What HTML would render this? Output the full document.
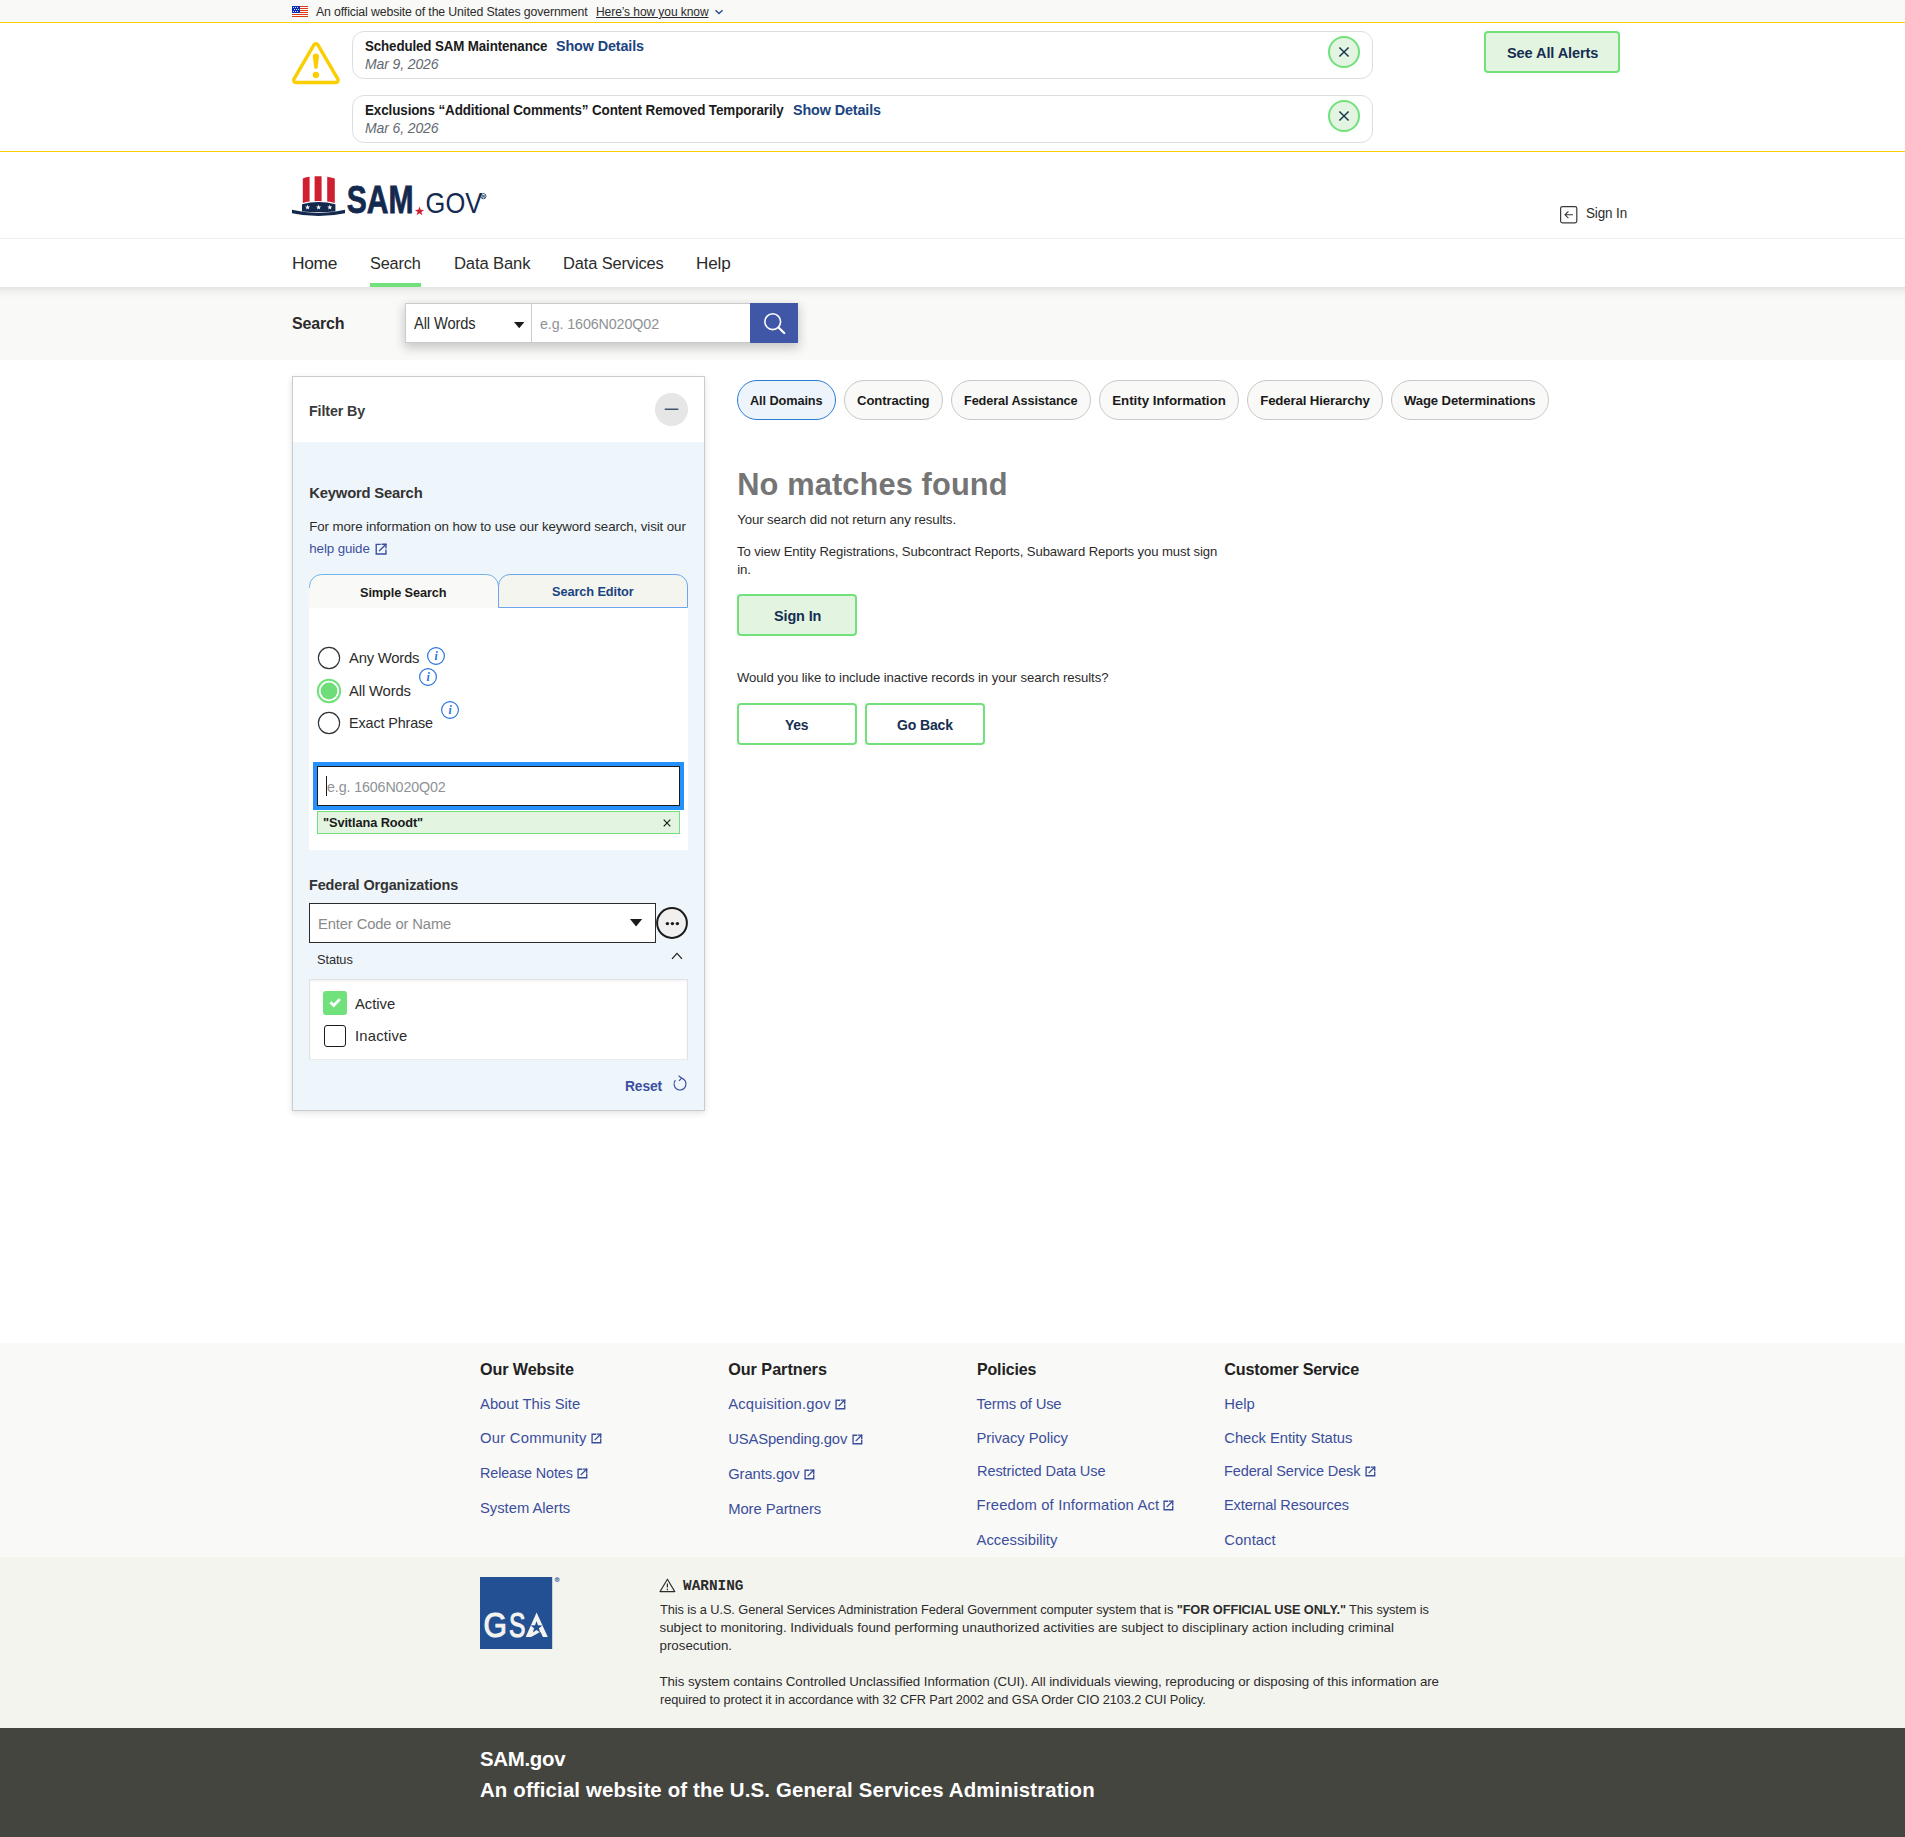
<!DOCTYPE html>
<html lang="en"><head><meta charset="utf-8"><title>SAM.gov | Search</title>
<style>
html,body{margin:0;padding:0;}
body{width:1905px;height:1837px;position:relative;overflow:hidden;background:#fff;font-family:"Liberation Sans", sans-serif;color:#1b1b1b;}
div,svg{position:absolute;box-sizing:border-box;}
.t{position:absolute;transform-origin:0 50%;white-space:nowrap;line-height:20px;height:20px;margin:0;padding:0;font-weight:400;display:block;text-decoration:none;}
a.t{cursor:pointer;}
svg{overflow:visible;}
</style></head>
<body>
<div style="left:0px;top:0px;width:1905px;height:21px;background:#f9f9f7;"></div>
<div style="left:0px;top:21px;width:1905px;height:1px;background:#f8fbfe;"></div>
<svg style="left:292px;top:6px" width="16" height="11" viewBox="0 0 16 11"><rect width="16" height="11" fill="#fff"/><rect y="0" width="16" height="1" fill="#dc3a10"/><rect y="2" width="16" height="1" fill="#dc3a10"/><rect y="4" width="16" height="1" fill="#dc3a10"/><rect y="6" width="16" height="1" fill="#dc3a10"/><rect y="8" width="16" height="1" fill="#dc3a10"/><rect y="10" width="16" height="1" fill="#dc3a10"/><rect width="8" height="7" fill="#0a2db5"/><circle cx="1.5" cy="1.5" r="0.56" fill="#fff"/><circle cx="3.5" cy="1.5" r="0.56" fill="#fff"/><circle cx="5.5" cy="1.5" r="0.56" fill="#fff"/><circle cx="2.5" cy="3.5" r="0.56" fill="#fff"/><circle cx="4.5" cy="3.5" r="0.56" fill="#fff"/><circle cx="6.5" cy="3.5" r="0.56" fill="#fff"/><circle cx="1.5" cy="5.5" r="0.56" fill="#fff"/><circle cx="3.5" cy="5.5" r="0.56" fill="#fff"/><circle cx="5.5" cy="5.5" r="0.56" fill="#fff"/></svg>
<svg style="left:714px;top:8px" width="10" height="8" viewBox="0 0 10 8" fill="none" stroke="#2e4c8f" stroke-width="1.4"><path d="M1.5 2.2L5 5.6L8.5 2.2"/></svg>
<div style="left:0px;top:22px;width:1905px;height:130px;background:#fff;border-top:1px solid #face00;border-bottom:1px solid #face00;"></div>
<svg style="left:288px;top:38px" width="56" height="50" viewBox="288 38 56 50" fill="none"><path d="M313.91 44.80A2.3 2.3 0 0 1 317.89 44.80L337.88 79.04A2.3 2.3 0 0 1 335.89 82.50L295.91 82.50A2.3 2.3 0 0 1 293.92 79.04Z" stroke="#face00" stroke-width="3.4"/><path d="M312.8 56.7A3.1 3.1 0 0 1 319 56.7L317.65 67.35A1.75 1.75 0 0 1 314.15 67.35Z" fill="#face00"/><circle cx="315.9" cy="74.95" r="3.15" fill="#face00"/></svg>
<div style="left:352px;top:31px;width:1021px;height:48px;background:#fff;border:1px solid #dcdee0;border-radius:12px;"></div>
<svg style="left:1327px;top:35px" width="34" height="34" viewBox="-17 -17 34 34"><circle r="15" fill="#e3f5e1" stroke="#70e17b" stroke-width="2"/><path d="M-4.6 -4.6L4.6 4.6M4.6 -4.6L-4.6 4.6" stroke="#162e51" stroke-width="1.4"/></svg>
<div style="left:352px;top:95px;width:1021px;height:48px;background:#fff;border:1px solid #dcdee0;border-radius:12px;"></div>
<svg style="left:1327px;top:99px" width="34" height="34" viewBox="-17 -17 34 34"><circle r="15" fill="#e3f5e1" stroke="#70e17b" stroke-width="2"/><path d="M-4.6 -4.6L4.6 4.6M4.6 -4.6L-4.6 4.6" stroke="#162e51" stroke-width="1.4"/></svg>
<div style="left:1484px;top:31px;width:136px;height:42px;background:#e3f5e1;border:2px solid #70e17b;border-radius:4px;"></div>
<div style="left:0px;top:152px;width:1905px;height:87px;background:#fff;border-bottom:1px solid #f1f1ec;"></div>
<svg style="left:290px;top:172px" width="200" height="48" viewBox="290 172 200 48"><path d="M302.8 178.4 Q306 177.2 309.6 176.8 V201.6 Q306 202 302.8 203 Z" fill="#cf2030"/><path d="M314.6 176.3 Q318 176.1 321.6 176.3 V201.2 Q318 201 314.6 201.2 Z" fill="#cf2030"/><path d="M327.2 176.8 Q331 177.2 334.8 178.6 V203 Q331 202 327.2 201.6 Z" fill="#cf2030"/><path d="M302 204.2 Q318.5 199.6 335.4 204.2 V211.4 Q318.5 213 302 211.4 Z" fill="#14294e"/><polygon points="307.60,204.60 308.23,206.43 310.17,206.47 308.63,207.63 309.19,209.48 307.60,208.38 306.01,209.48 306.57,207.63 305.03,206.47 306.97,206.43" fill="#fff"/><polygon points="318.60,204.60 319.23,206.43 321.17,206.47 319.63,207.63 320.19,209.48 318.60,208.38 317.01,209.48 317.57,207.63 316.03,206.47 317.97,206.43" fill="#fff"/><polygon points="329.80,204.60 330.43,206.43 332.37,206.47 330.83,207.63 331.39,209.48 329.80,208.38 328.21,209.48 328.77,207.63 327.23,206.47 329.17,206.43" fill="#fff"/><path d="M292 209.8 Q318.5 216.4 345 209.8 V213.2 Q318.5 219 292 213.2 Z" fill="#14294e"/><text x="346.8" y="212.7" font-family="Liberation Sans, sans-serif" font-weight="700" font-size="39" fill="#14294e" textLength="66.8" lengthAdjust="spacingAndGlyphs" stroke="#14294e" stroke-width="0.8">SAM</text><polygon points="419.50,206.50 420.65,209.81 424.16,209.89 421.36,212.01 422.38,215.36 419.50,213.36 416.62,215.36 417.64,212.01 414.84,209.89 418.35,209.81" fill="#cf2030"/><text x="425.6" y="212.7" font-family="Liberation Sans, sans-serif" font-weight="400" font-size="29.6" fill="#14294e" textLength="56.6" lengthAdjust="spacingAndGlyphs">GOV</text><circle cx="483.4" cy="196.2" r="2.6" fill="none" stroke="#14294e" stroke-width="0.8"/><text x="483.4" y="197.8" text-anchor="middle" font-family="Liberation Sans, sans-serif" font-weight="700" font-size="4.2" fill="#14294e">R</text></svg>
<svg style="left:1559px;top:205px" width="20" height="20" viewBox="1559 205 20 20" fill="none" stroke="#3a3a36" stroke-width="1.2"><rect x="1560.6" y="206.6" width="16.2" height="16.2" rx="1.8"/><path d="M1573 214.8H1565.2M1568.4 211.4L1565 214.8L1568.4 218.2" stroke-width="1.1"/></svg>
<div style="left:0px;top:239px;width:1905px;height:48px;background:#fff;"></div>
<div style="left:370px;top:283px;width:51px;height:4px;background:#70e17b;"></div>
<div style="left:0px;top:287px;width:1905px;height:73px;background:#f9f9f7;"></div>
<div style="left:0px;top:287px;width:1905px;height:11px;background:linear-gradient(to bottom, rgba(0,0,0,0.085), rgba(0,0,0,0.035) 40%, rgba(0,0,0,0));"></div>
<div style="left:405px;top:303px;width:393px;height:40px;background:#fff;box-shadow:0 4px 10px 1px rgba(0,0,0,0.2);"></div>
<div style="left:405px;top:303px;width:127px;height:40px;background:#fff;border:1px solid #c9cbcd;"></div>
<div style="left:531px;top:303px;width:220px;height:40px;background:#fff;border:1px solid #c9cbcd;"></div>
<svg style="left:514px;top:321.5px" width="10.4" height="6.2" viewBox="0 0 10.4 6.2"><path d="M0 0H10.4L5.2 6.2Z" fill="#1b1b1b"/></svg>
<div style="left:750px;top:303px;width:48px;height:40px;background:#3f57a6;"></div>
<svg style="left:760px;top:310px" width="28" height="28" viewBox="760 310 28 28" fill="none" stroke="#fff" stroke-width="2" stroke-linecap="round"><circle cx="772.7" cy="321.7" r="7.9" stroke-width="1.6"/><path d="M778.5 327.5L784.2 333" stroke-width="2.3"/></svg>
<div style="left:292px;top:376px;width:413px;height:735px;background:#eff6fb;border:1px solid #c9cbcd;box-shadow:0 2px 6px rgba(0,0,0,0.12);"></div>
<div style="left:293px;top:377px;width:411px;height:65px;background:#fff;"></div>
<svg style="left:654px;top:392px" width="35" height="35" viewBox="-17.5 -17.5 35 35"><circle r="16.6" fill="#e6e6e6"/><path d="M-6.8 -0.3H6.8" stroke="#162e51" stroke-width="1.2"/></svg>
<svg style="left:374.7px;top:542.5px" width="12.2" height="12.2" viewBox="0 0 12 12" fill="none" stroke="#3d4f9f" stroke-width="1.35" stroke-linecap="square"><path d="M5 1.4H1.2V10.8H10.8V7"/><path d="M7.2 1.2H10.8V4.8"/><path d="M10.6 1.4L4.6 7.4"/></svg>
<div style="left:309px;top:574px;width:190px;height:34px;background:#f9f9f7;border-radius:12px 12px 0 0;"></div>
<svg style="left:309px;top:574px" width="190" height="16" viewBox="0 0 190 16" fill="none" stroke="#73b3e7" stroke-width="1"><path d="M0.5 14 V12.5 A12 12 0 0 1 12.5 0.5 H177.5 A12 12 0 0 1 189.5 12.5 V14" /></svg>
<div style="left:498px;top:574px;width:190px;height:34px;background:#f5f5f0;border:1px solid #6aa5ee;border-radius:12px 12px 0 0;"></div>
<div style="left:309px;top:608px;width:379px;height:242px;background:#fff;"></div>
<svg style="left:316px;top:644.8px" width="26" height="26" viewBox="-13 -13 26 26"><circle r="10.6" fill="#fff" stroke="#333" stroke-width="1.15"/></svg>
<svg style="left:316px;top:677.6px" width="26" height="26" viewBox="-13 -13 26 26"><circle r="11.2" fill="#fff" stroke="#70e17b" stroke-width="2"/><circle r="8.4" fill="#6fdc7a"/></svg>
<svg style="left:316px;top:710px" width="26" height="26" viewBox="-13 -13 26 26"><circle r="10.6" fill="#fff" stroke="#333" stroke-width="1.15"/></svg>
<svg style="left:426.2px;top:646px" width="20" height="20" viewBox="-10 -10 20 20"><circle r="8.4" fill="none" stroke="#2672de" stroke-width="1.15"/><text x="0" y="4" text-anchor="middle" font-family="Liberation Serif, serif" font-style="italic" font-weight="700" font-size="11.6" fill="#2672de">i</text></svg>
<svg style="left:418px;top:667px" width="20" height="20" viewBox="-10 -10 20 20"><circle r="8.4" fill="none" stroke="#2672de" stroke-width="1.15"/><text x="0" y="4" text-anchor="middle" font-family="Liberation Serif, serif" font-style="italic" font-weight="700" font-size="11.6" fill="#2672de">i</text></svg>
<svg style="left:440.2px;top:700px" width="20" height="20" viewBox="-10 -10 20 20"><circle r="8.4" fill="none" stroke="#2672de" stroke-width="1.15"/><text x="0" y="4" text-anchor="middle" font-family="Liberation Serif, serif" font-style="italic" font-weight="700" font-size="11.6" fill="#2672de">i</text></svg>
<div style="left:313px;top:762px;width:371px;height:48px;background:#fff;border:4px solid #2491ff;"></div>
<div style="left:317px;top:766px;width:363px;height:40px;background:#fff;border:1px solid #1b1b1b;"></div>
<div style="left:326px;top:776px;width:1.2px;height:20px;background:#1b1b1b;"></div>
<div style="left:317px;top:811px;width:363px;height:23px;background:#e3f5e1;border:1px solid #70e17b;"></div>
<svg style="left:662.8px;top:818.6px" width="8" height="8" viewBox="0 0 8 8"><path d="M0.7 0.7L7.3 7.3M7.3 0.7L0.7 7.3" stroke="#1b1b1b" stroke-width="1.2"/></svg>
<div style="left:309px;top:903px;width:347px;height:40px;background:#fff;border:1px solid #2b2b2b;"></div>
<svg style="left:629.8px;top:919px" width="12.2" height="7.6" viewBox="0 0 12.2 7.6"><path d="M0 0H12.2L6.1 7.6Z" fill="#1b1b1b"/></svg>
<svg style="left:655px;top:906px" width="34" height="34" viewBox="-17 -17 34 34"><circle r="14.9" fill="#f0f0f0" stroke="#1b1b1b" stroke-width="2"/><circle cx="-4.6" cy="0.6" r="1.7" fill="#1b1b1b"/><circle cx="0.4" cy="0.6" r="1.7" fill="#1b1b1b"/><circle cx="5.4" cy="0.6" r="1.7" fill="#1b1b1b"/></svg>
<svg style="left:670.5px;top:951.5px" width="12" height="8" viewBox="0 0 12 8" fill="none" stroke="#1b1b1b" stroke-width="1.2"><path d="M1 6.8L6 1.4L11 6.8"/></svg>
<div style="left:309px;top:979px;width:379px;height:81px;background:#fff;border:1px solid #dfe1e2;border-bottom-color:#e8ecef;box-shadow:inset 0 1px 2px rgba(0,0,0,0.06);"></div>
<div style="left:323px;top:991px;width:24px;height:24px;background:#70e17b;border-radius:3px;"></div>
<svg style="left:323px;top:991px" width="24" height="24" viewBox="0 0 24 24" fill="none" stroke="#fff" stroke-width="2.8"><path d="M7.4 11.3L10.7 14.5L16.9 8.1"/></svg>
<div style="left:324px;top:1025px;width:22px;height:22px;background:#fff;border:1.5px solid #1b1b1b;border-radius:3px;"></div>
<svg style="left:671px;top:1075px" width="18" height="18" viewBox="-9 -9 18 18" fill="none" stroke="#3d4f9f" stroke-width="1.2"><path d="M1.2 -5.9 A6 6 0 1 1 -4.6 -3.8"/><path d="M-1.4 -8.2L1.6 -5.9L-1 -3.2" stroke-linejoin="miter"/></svg>
<div style="left:737px;top:380px;width:99px;height:40px;background:#edf4fc;border:1px solid #2b7bd6;border-radius:20px;"></div>
<div style="left:844px;top:380px;width:99px;height:40px;background:#f9f9f7;border:1px solid #c9c9c9;border-radius:20px;"></div>
<div style="left:951px;top:380px;width:140px;height:40px;background:#f9f9f7;border:1px solid #c9c9c9;border-radius:20px;"></div>
<div style="left:1099px;top:380px;width:140px;height:40px;background:#f9f9f7;border:1px solid #c9c9c9;border-radius:20px;"></div>
<div style="left:1247px;top:380px;width:136px;height:40px;background:#f9f9f7;border:1px solid #c9c9c9;border-radius:20px;"></div>
<div style="left:1391px;top:380px;width:158px;height:40px;background:#f9f9f7;border:1px solid #c9c9c9;border-radius:20px;"></div>
<div style="left:737px;top:594px;width:120px;height:42px;background:#e3f5e1;border:2px solid #70e17b;border-radius:4px;"></div>
<div style="left:737px;top:703px;width:120px;height:42px;background:#fff;border:2px solid #70e17b;border-radius:4px;"></div>
<div style="left:865px;top:703px;width:120px;height:42px;background:#fff;border:2px solid #70e17b;border-radius:4px;"></div>
<div style="left:0px;top:1343px;width:1905px;height:214px;background:#f9f9f7;"></div>
<svg style="left:590.7px;top:1432.8px" width="10.8" height="10.8" viewBox="0 0 12 12" fill="none" stroke="#3b4e9c" stroke-width="1.5" stroke-linecap="square"><path d="M5 1.4H1.2V10.8H10.8V7"/><path d="M7.2 1.2H10.8V4.8"/><path d="M10.6 1.4L4.6 7.4"/></svg>
<svg style="left:577.1px;top:1467.5px" width="10.8" height="10.8" viewBox="0 0 12 12" fill="none" stroke="#3b4e9c" stroke-width="1.5" stroke-linecap="square"><path d="M5 1.4H1.2V10.8H10.8V7"/><path d="M7.2 1.2H10.8V4.8"/><path d="M10.6 1.4L4.6 7.4"/></svg>
<svg style="left:834.8px;top:1398.9px" width="10.8" height="10.8" viewBox="0 0 12 12" fill="none" stroke="#3b4e9c" stroke-width="1.5" stroke-linecap="square"><path d="M5 1.4H1.2V10.8H10.8V7"/><path d="M7.2 1.2H10.8V4.8"/><path d="M10.6 1.4L4.6 7.4"/></svg>
<svg style="left:851.6px;top:1433.9px" width="10.8" height="10.8" viewBox="0 0 12 12" fill="none" stroke="#3b4e9c" stroke-width="1.5" stroke-linecap="square"><path d="M5 1.4H1.2V10.8H10.8V7"/><path d="M7.2 1.2H10.8V4.8"/><path d="M10.6 1.4L4.6 7.4"/></svg>
<svg style="left:803.8px;top:1469px" width="10.8" height="10.8" viewBox="0 0 12 12" fill="none" stroke="#3b4e9c" stroke-width="1.5" stroke-linecap="square"><path d="M5 1.4H1.2V10.8H10.8V7"/><path d="M7.2 1.2H10.8V4.8"/><path d="M10.6 1.4L4.6 7.4"/></svg>
<svg style="left:1163.4px;top:1500px" width="10.8" height="10.8" viewBox="0 0 12 12" fill="none" stroke="#3b4e9c" stroke-width="1.5" stroke-linecap="square"><path d="M5 1.4H1.2V10.8H10.8V7"/><path d="M7.2 1.2H10.8V4.8"/><path d="M10.6 1.4L4.6 7.4"/></svg>
<svg style="left:1365px;top:1465.9px" width="10.8" height="10.8" viewBox="0 0 12 12" fill="none" stroke="#3b4e9c" stroke-width="1.5" stroke-linecap="square"><path d="M5 1.4H1.2V10.8H10.8V7"/><path d="M7.2 1.2H10.8V4.8"/><path d="M10.6 1.4L4.6 7.4"/></svg>
<div style="left:0px;top:1557px;width:1905px;height:171px;background:#f4f4ef;"></div>
<svg style="left:480px;top:1577px" width="82" height="72" viewBox="0 0 82 72"><rect width="72.2" height="72" fill="#235093"/><text x="3.4" y="59.9" font-family="Liberation Sans, sans-serif" font-size="34.4" fill="#f4f4ef" stroke="#f4f4ef" stroke-width="1.1" textLength="23.4" lengthAdjust="spacingAndGlyphs">G</text><text x="29.1" y="59.9" font-family="Liberation Sans, sans-serif" font-size="34.4" fill="#f4f4ef" stroke="#f4f4ef" stroke-width="1.1" textLength="16.4" lengthAdjust="spacingAndGlyphs">S</text><polygon points="56.6,35.4 67.8,60.1 45.7,60.1" fill="#f4f4ef"/><polygon points="56.50,44.10 57.98,48.36 62.49,48.45 58.90,51.18 60.20,55.50 56.50,52.92 52.80,55.50 54.10,51.18 50.51,48.45 55.02,48.36" fill="#235093"/><polygon points="50.6,60.3 59.2,55.4 60.6,55.0 63.0,60.3" fill="#235093"/><circle cx="77.2" cy="2.6" r="2.1" fill="none" stroke="#235093" stroke-width="0.6"/><text x="77.2" y="3.8" text-anchor="middle" font-family="Liberation Sans, sans-serif" font-weight="700" font-size="3.4" fill="#235093">R</text></svg>
<svg style="left:659px;top:1578px" width="17" height="15" viewBox="0 0 17 15" fill="none" stroke="#2b2b2b" stroke-width="1.1" stroke-linejoin="round"><path d="M8.4 1.2L15.8 13.6H1L8.4 1.2Z"/><path d="M8.4 5.6V9.6M8.4 10.8V12.2" stroke-width="1.2"/></svg>
<div style="left:0px;top:1728px;width:1905px;height:109px;background:#454540;"></div>
<span class="t" style="left:316px;top:2.00px;font-size:12.3px;color:#2b2b2b;letter-spacing:-0.128px;">An official website of the United States government</span>
<a class="t" style="left:596px;top:2.00px;font-size:12.3px;color:#2b2b2b;letter-spacing:-0.097px;transform:scaleX(0.9799);text-decoration:underline;text-underline-offset:1px;">Here&rsquo;s how you know</a>
<span class="t" style="left:365.2px;top:36.00px;font-size:14.6px;font-weight:700;letter-spacing:-0.127px;transform:scaleX(0.9134);">Scheduled SAM Maintenance</span>
<a class="t" style="left:556.3px;top:36.00px;font-size:14.6px;font-weight:700;color:#1a4480;letter-spacing:-0.124px;transform:scaleX(0.9836);">Show Details</a>
<span class="t" style="left:365.2px;top:54.00px;font-size:14.8px;color:#636870;font-style:italic;letter-spacing:-0.118px;transform:scaleX(0.9449);">Mar 9, 2026</span>
<span class="t" style="left:365.2px;top:100.00px;font-size:14.6px;font-weight:700;letter-spacing:-0.117px;transform:scaleX(0.9200);">Exclusions &ldquo;Additional Comments&rdquo; Content Removed Temporarily</span>
<a class="t" style="left:792.5px;top:100.00px;font-size:14.6px;font-weight:700;color:#1a4480;letter-spacing:-0.124px;transform:scaleX(0.9836);">Show Details</a>
<span class="t" style="left:365.2px;top:118.00px;font-size:14.8px;color:#636870;font-style:italic;letter-spacing:-0.118px;transform:scaleX(0.9449);">Mar 6, 2026</span>
<a class="t" style="left:1506.8px;top:43.00px;font-size:14.8px;font-weight:700;color:#162e51;letter-spacing:-0.109px;transform:scaleX(0.9839);">See All Alerts</a>
<a class="t" style="left:1586.2px;top:203.00px;font-size:15.1px;color:#2b2b2b;letter-spacing:-0.117px;transform:scaleX(0.8899);">Sign In</a>
<a class="t" style="left:292px;top:253.00px;font-size:17.4px;color:#2b2b2b;letter-spacing:-0.364px;">Home</a>
<a class="t" style="left:370px;top:253.00px;font-size:17.4px;color:#2b2b2b;letter-spacing:-0.165px;transform:scaleX(0.9358);">Search</a>
<a class="t" style="left:453.5px;top:253.00px;font-size:17.4px;color:#2b2b2b;letter-spacing:-0.152px;transform:scaleX(0.9562);">Data Bank</a>
<a class="t" style="left:562.5px;top:253.00px;font-size:17.4px;color:#2b2b2b;letter-spacing:-0.135px;transform:scaleX(0.9454);">Data Services</a>
<a class="t" style="left:695.7px;top:253.00px;font-size:17.4px;color:#2b2b2b;letter-spacing:-0.179px;transform:scaleX(0.9845);">Help</a>
<span class="t" style="left:292px;top:313.00px;font-size:17.4px;font-weight:700;color:#2b2b2b;letter-spacing:-0.174px;transform:scaleX(0.9205);">Search</span>
<span class="t" style="left:414.4px;top:314.00px;font-size:15.8px;color:#2b2b2b;letter-spacing:-0.126px;transform:scaleX(0.9291);">All Words</span>
<span class="t" style="left:540.3px;top:314.00px;font-size:15.4px;color:#8e9296;letter-spacing:-0.130px;transform:scaleX(0.9295);">e.g. 1606N020Q02</span>
<span class="t" style="left:309.3px;top:401.00px;font-size:14.8px;font-weight:700;color:#3a3a3a;letter-spacing:-0.111px;transform:scaleX(0.9637);">Filter By</span>
<span class="t" style="left:309.3px;top:483.00px;font-size:14.8px;font-weight:700;color:#333;letter-spacing:-0.198px;">Keyword Search</span>
<span class="t" style="left:309.3px;top:517.00px;font-size:13.3px;color:#2b2b2b;letter-spacing:-0.100px;">For more information on how to use our keyword search, visit our</span>
<a class="t" style="left:309.3px;top:539.00px;font-size:13.3px;color:#3d4f9f;letter-spacing:-0.097px;">help guide</a>
<span class="t" style="left:359.9px;top:583.00px;font-size:13.3px;font-weight:700;letter-spacing:-0.115px;transform:scaleX(0.9592);">Simple Search</span>
<a class="t" style="left:552px;top:582.00px;font-size:13.3px;font-weight:700;color:#1a4480;letter-spacing:-0.108px;transform:scaleX(0.9604);">Search Editor</a>
<span class="t" style="left:349px;top:648.00px;font-size:14.8px;color:#2b2b2b;letter-spacing:-0.224px;">Any Words</span>
<span class="t" style="left:349px;top:681.00px;font-size:14.8px;color:#2b2b2b;letter-spacing:-0.131px;">All Words</span>
<span class="t" style="left:349px;top:713.00px;font-size:14.8px;color:#2b2b2b;letter-spacing:-0.120px;transform:scaleX(0.9701);">Exact Phrase</span>
<span class="t" style="left:326.6px;top:777.00px;font-size:15.2px;color:#8e9296;letter-spacing:-0.128px;transform:scaleX(0.9396);">e.g. 1606N020Q02</span>
<span class="t" style="left:323.4px;top:813.00px;font-size:13.3px;font-weight:700;letter-spacing:-0.106px;transform:scaleX(0.9624);">&quot;Svitlana Roodt&quot;</span>
<span class="t" style="left:309.3px;top:875.00px;font-size:14.8px;font-weight:700;color:#333;letter-spacing:-0.117px;transform:scaleX(0.9747);">Federal Organizations</span>
<span class="t" style="left:318.3px;top:914.00px;font-size:15.2px;color:#8a8a8a;letter-spacing:-0.123px;transform:scaleX(0.9715);">Enter Code or Name</span>
<span class="t" style="left:317.4px;top:950.00px;font-size:13.3px;color:#2b2b2b;letter-spacing:-0.113px;transform:scaleX(0.9640);">Status</span>
<span class="t" style="left:355px;top:994.00px;font-size:14.8px;color:#2b2b2b;letter-spacing:-0.019px;">Active</span>
<span class="t" style="left:355px;top:1026.00px;font-size:14.8px;color:#2b2b2b;letter-spacing:0.186px;">Inactive</span>
<a class="t" style="left:625.3px;top:1076.00px;font-size:14.8px;font-weight:700;color:#3d4f9f;letter-spacing:-0.151px;transform:scaleX(0.9343);">Reset</a>
<a class="t" style="left:750.2px;top:391.00px;font-size:13.3px;font-weight:700;letter-spacing:-0.115px;transform:scaleX(0.9592);">All Domains</a>
<a class="t" style="left:857.2px;top:391.00px;font-size:13.3px;font-weight:700;letter-spacing:-0.112px;transform:scaleX(0.9879);">Contracting</a>
<a class="t" style="left:964.2px;top:391.00px;font-size:13.3px;font-weight:700;letter-spacing:-0.107px;transform:scaleX(0.9554);">Federal Assistance</a>
<a class="t" style="left:1112.2px;top:391.00px;font-size:13.3px;font-weight:700;letter-spacing:-0.010px;">Entity Information</a>
<a class="t" style="left:1260.2px;top:391.00px;font-size:13.3px;font-weight:700;letter-spacing:-0.171px;">Federal Hierarchy</a>
<a class="t" style="left:1404.2px;top:391.00px;font-size:13.3px;font-weight:700;letter-spacing:-0.113px;transform:scaleX(0.9862);">Wage Determinations</a>
<h1 class="t" style="left:737.2px;top:475.00px;font-size:30.8px;font-weight:700;color:#757575;letter-spacing:0.117px;">No matches found</h1>
<span class="t" style="left:737.2px;top:510.00px;font-size:13.3px;color:#2b2b2b;letter-spacing:-0.140px;">Your search did not return any results.</span>
<span class="t" style="left:737.2px;top:542.00px;font-size:13.3px;color:#2b2b2b;letter-spacing:-0.093px;transform:scaleX(0.9862);">To view Entity Registrations, Subcontract Reports, Subaward Reports you must sign</span>
<span class="t" style="left:737.2px;top:560.00px;font-size:13.3px;color:#2b2b2b;letter-spacing:-0.123px;">in.</span>
<a class="t" style="left:773.7px;top:606.00px;font-size:14.8px;font-weight:700;color:#162e51;letter-spacing:-0.123px;transform:scaleX(0.9755);">Sign In</a>
<span class="t" style="left:737.2px;top:668.00px;font-size:13.3px;color:#2b2b2b;letter-spacing:-0.088px;transform:scaleX(0.9896);">Would you like to include inactive records in your search results?</span>
<a class="t" style="left:785.4px;top:715.00px;font-size:14.8px;font-weight:700;color:#162e51;letter-spacing:-0.191px;transform:scaleX(0.9390);">Yes</a>
<a class="t" style="left:897.4px;top:715.00px;font-size:14.8px;font-weight:700;color:#162e51;letter-spacing:-0.150px;transform:scaleX(0.9468);">Go Back</a>
<h3 class="t" style="left:480px;top:1359.00px;font-size:16.2px;font-weight:700;color:#222;letter-spacing:-0.115px;">Our Website</h3>
<h3 class="t" style="left:728.2px;top:1359.00px;font-size:16.2px;font-weight:700;color:#222;letter-spacing:-0.024px;">Our Partners</h3>
<h3 class="t" style="left:976.5px;top:1359.00px;font-size:16.2px;font-weight:700;color:#222;letter-spacing:-0.131px;transform:scaleX(0.9839);">Policies</h3>
<h3 class="t" style="left:1224.3px;top:1359.00px;font-size:16.2px;font-weight:700;color:#222;letter-spacing:-0.185px;">Customer Service</h3>
<a class="t" style="left:480px;top:1394.00px;font-size:14.8px;color:#3b4e9c;letter-spacing:0.009px;">About This Site</a>
<a class="t" style="left:480px;top:1428.00px;font-size:14.8px;color:#3b4e9c;letter-spacing:0.241px;">Our Community</a>
<a class="t" style="left:480px;top:1463.00px;font-size:14.8px;color:#3b4e9c;letter-spacing:-0.121px;transform:scaleX(0.9717);">Release Notes</a>
<a class="t" style="left:480px;top:1498.00px;font-size:14.8px;color:#3b4e9c;letter-spacing:-0.021px;">System Alerts</a>
<a class="t" style="left:728.2px;top:1394.00px;font-size:14.8px;color:#3b4e9c;letter-spacing:0.205px;">Acquisition.gov</a>
<a class="t" style="left:728.2px;top:1429.00px;font-size:14.8px;color:#3b4e9c;letter-spacing:-0.124px;">USASpending.gov</a>
<a class="t" style="left:728.2px;top:1464.00px;font-size:14.8px;color:#3b4e9c;letter-spacing:-0.108px;">Grants.gov</a>
<a class="t" style="left:728.2px;top:1499.00px;font-size:14.8px;color:#3b4e9c;letter-spacing:-0.062px;">More Partners</a>
<a class="t" style="left:976.5px;top:1394.00px;font-size:14.8px;color:#3b4e9c;letter-spacing:-0.187px;">Terms of Use</a>
<a class="t" style="left:976.5px;top:1428.00px;font-size:14.8px;color:#3b4e9c;letter-spacing:-0.053px;">Privacy Policy</a>
<a class="t" style="left:976.5px;top:1461.00px;font-size:14.8px;color:#3b4e9c;letter-spacing:-0.110px;transform:scaleX(0.9860);">Restricted Data Use</a>
<a class="t" style="left:976.5px;top:1495.00px;font-size:14.8px;color:#3b4e9c;letter-spacing:0.169px;">Freedom of Information Act</a>
<a class="t" style="left:976.5px;top:1530.00px;font-size:14.8px;color:#3b4e9c;letter-spacing:0.026px;">Accessibility</a>
<a class="t" style="left:1224.3px;top:1394.00px;font-size:14.8px;color:#3b4e9c;letter-spacing:-0.012px;">Help</a>
<a class="t" style="left:1224.3px;top:1428.00px;font-size:14.8px;color:#3b4e9c;letter-spacing:-0.057px;">Check Entity Status</a>
<a class="t" style="left:1224.3px;top:1461.00px;font-size:14.8px;color:#3b4e9c;letter-spacing:-0.112px;transform:scaleX(0.9797);">Federal Service Desk</a>
<a class="t" style="left:1224.3px;top:1495.00px;font-size:14.8px;color:#3b4e9c;letter-spacing:-0.114px;transform:scaleX(0.9820);">External Resources</a>
<a class="t" style="left:1224.3px;top:1530.00px;font-size:14.8px;color:#3b4e9c;letter-spacing:0.067px;">Contact</a>
<span class="t" style="left:683.1px;top:1576.00px;font-size:14.4px;font-weight:700;color:#2b2b2b;font-family:'Liberation Mono', monospace;letter-spacing:-0.009px;">WARNING</span>
<span class="t" style="left:659.5px;top:1600.00px;font-size:13.3px;color:#2b2b2b;letter-spacing:-0.095px;transform:scaleX(0.9624);">This is a U.S. General Services Administration Federal Government computer system that is <b>&quot;FOR OFFICIAL USE ONLY.&quot;</b> This system is</span>
<span class="t" style="left:659.5px;top:1618.00px;font-size:13.3px;color:#2b2b2b;letter-spacing:0.033px;">subject to monitoring. Individuals found performing unauthorized activities are subject to disciplinary action including criminal</span>
<span class="t" style="left:659.5px;top:1636.00px;font-size:13.3px;color:#2b2b2b;letter-spacing:0.004px;">prosecution.</span>
<span class="t" style="left:659.5px;top:1672.00px;font-size:13.3px;color:#2b2b2b;letter-spacing:-0.072px;">This system contains Controlled Unclassified Information (CUI). All individuals viewing, reproducing or disposing of this information are</span>
<span class="t" style="left:659.5px;top:1690.00px;font-size:13.3px;color:#2b2b2b;letter-spacing:-0.092px;transform:scaleX(0.9593);">required to protect it in accordance with 32 CFR Part 2002 and GSA Order CIO 2103.2 CUI Policy.</span>
<span class="t" style="left:480px;top:1749.00px;font-size:20.4px;font-weight:700;color:#fff;letter-spacing:-0.289px;">SAM.gov</span>
<span class="t" style="left:480px;top:1780.00px;font-size:20.4px;font-weight:700;color:#fff;letter-spacing:0.148px;">An official website of the U.S. General Services Administration</span>
</body></html>
